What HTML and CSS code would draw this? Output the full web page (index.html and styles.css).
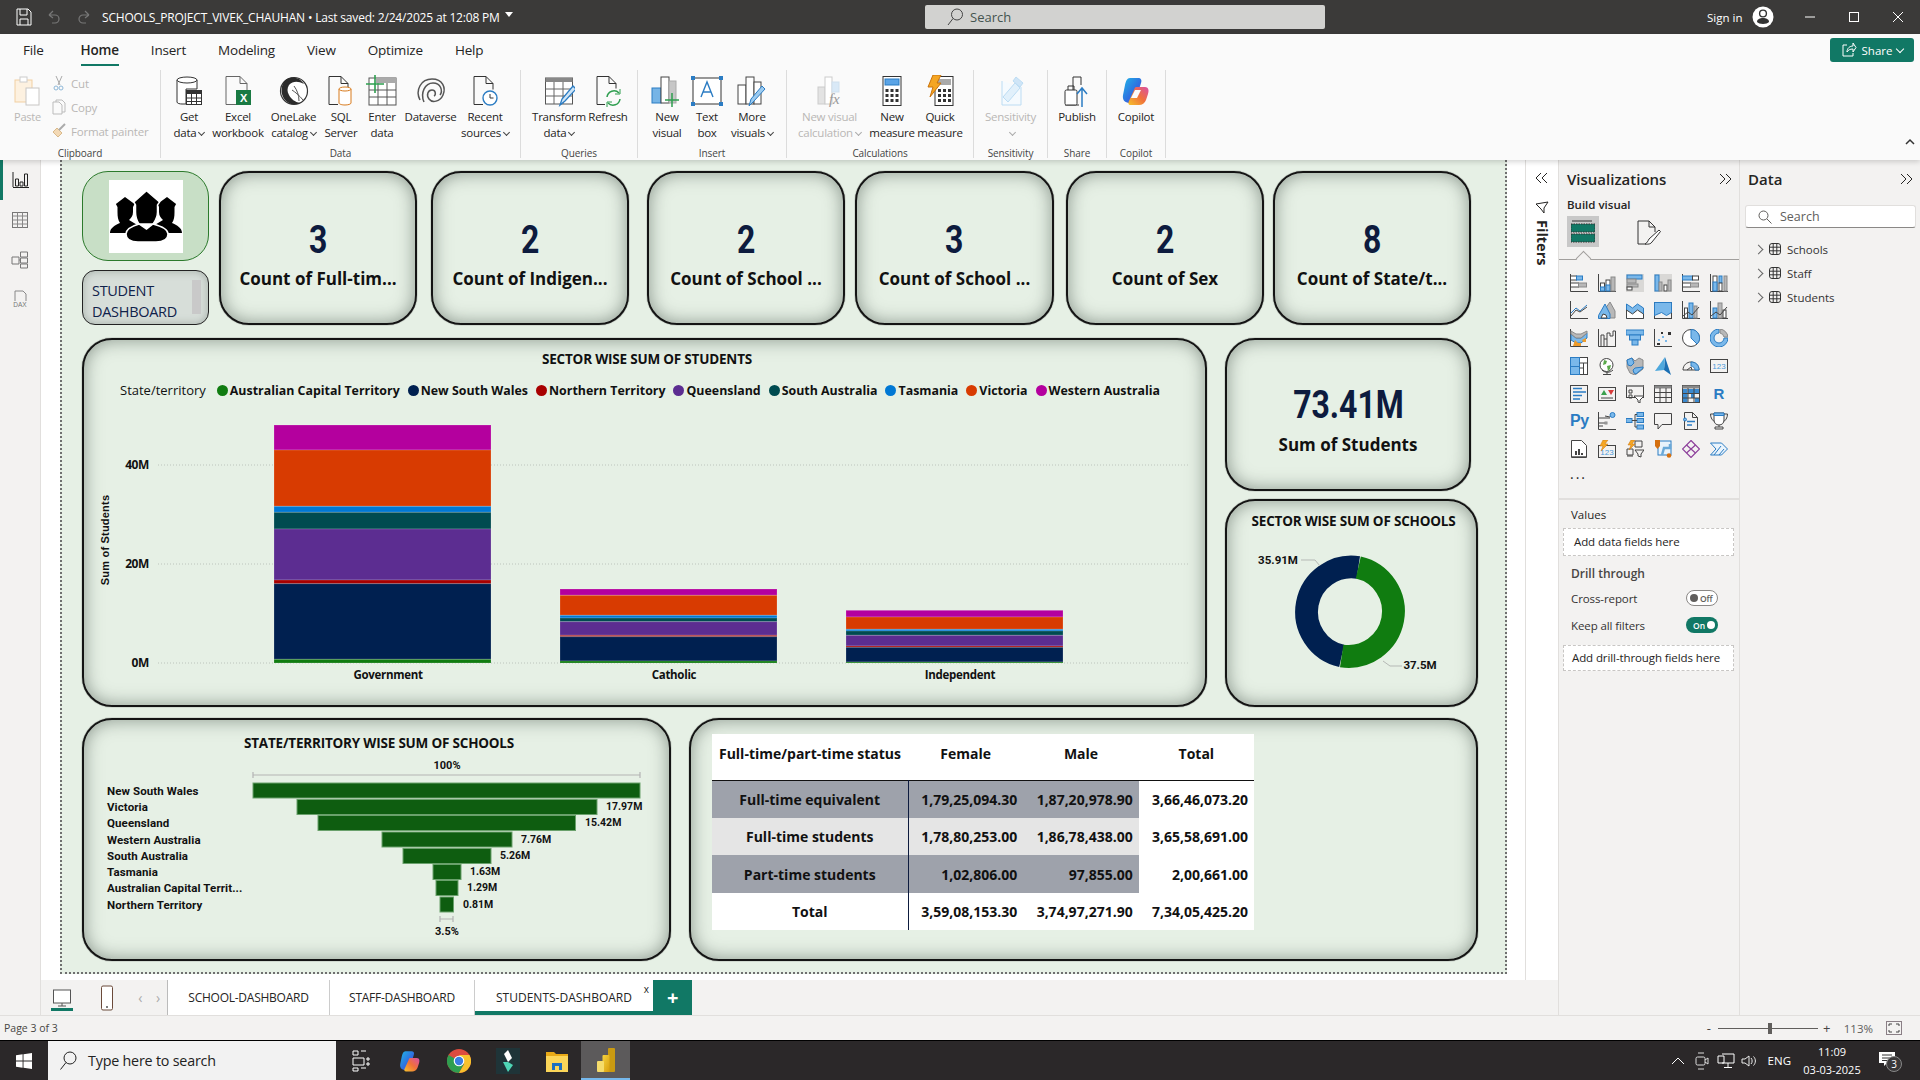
FILE: index.html
```html
<!DOCTYPE html>
<html lang="en">
<head>
<meta charset="UTF-8" />
<title>SCHOOLS_PROJECT_VIVEK_CHAUHAN - Power BI Desktop</title>
<link rel="stylesheet" href="styles.css">
</head>
<body>
  <svg class="defs" width="0" height="0" aria-hidden="true">
    <defs>
      <linearGradient id="copA" x1="0" y1="0" x2="1" y2="1"><stop offset="0" stop-color="#1fb6e8"/><stop offset=".55" stop-color="#2f6fe0"/><stop offset="1" stop-color="#7b3fd6"/></linearGradient>
      <linearGradient id="copB" x1="0" y1="1" x2="1" y2="0"><stop offset="0" stop-color="#f6c12c"/><stop offset=".5" stop-color="#f0713a"/><stop offset="1" stop-color="#d94fa8"/></linearGradient>
      <linearGradient id="pbiA" x1="0" y1="0" x2="1" y2="1"><stop offset="0" stop-color="#f5d33f"/><stop offset="1" stop-color="#d89e0c"/></linearGradient>
    </defs>
  </svg>

  <!-- title bar -->
  <header class="titlebar">
    <div class="tb-left">
      <svg class="tb-ico" width="16" height="18" viewBox="0 0 16 18"><path d="M1 1h11l3 3v13H1zM4 1v6h7V1M4 17v-6h8v6" fill="none" stroke="#fff"/></svg>
      <svg class="tb-ico" width="16" height="18" viewBox="0 0 16 18"><path d="M3 7l4-4M3 7l4 3M3 7h6a4 4 0 0 1 0 8H6" fill="none" stroke="#777" stroke-width="1.2"/></svg>
      <svg class="tb-ico" width="16" height="18" viewBox="0 0 16 18"><path d="M13 7L9 3M13 7l-4 3M13 7H7a4 4 0 0 0 0 8h3" fill="none" stroke="#777" stroke-width="1.2"/></svg>
      <span class="tb-title">SCHOOLS_PROJECT_VIVEK_CHAUHAN • Last saved: 2/24/2025 at 12:08 PM</span>
      <span class="tb-caret"></span>
    </div>
    <div class="tb-search">
      <svg width="20" height="20" viewBox="0 0 20 20"><circle cx="12" cy="7.5" r="5.5" fill="none" stroke="#444"/><path d="M8 11.5L3 18" stroke="#444" fill="none"/></svg>
      <span>Search</span>
    </div>
    <div class="tb-right">
      <span class="tb-sign">Sign in</span>
      <svg class="tb-avatar" width="22" height="22" viewBox="0 0 22 22"><circle cx="11" cy="11" r="10.5" fill="#fff"/><circle cx="11" cy="7.5" r="3.4" fill="none" stroke="#333" stroke-width="1.4"/><path d="M5 16c0-3 3-4 6-4s6 1 6 4c-2 2.600-10 2.600-12 0z" fill="#333"/></svg>
      <div class="win-btns">
        <svg width="12" height="12" viewBox="0 0 12 12"><path d="M1 6h10" stroke="#fff"/></svg>
        <svg width="12" height="12" viewBox="0 0 12 12"><rect x="1.500" y="1.500" width="9" height="9" fill="none" stroke="#fff"/></svg>
        <svg width="12" height="12" viewBox="0 0 12 12"><path d="M1 1l10 10M11 1L1 11" stroke="#fff"/></svg>
      </div>
    </div>
  </header>

  <!-- ribbon -->
  <section class="ribbon">
    <nav class="rb-tabs">
      <span class="tab-file">File</span><span class="active">Home</span><span>Insert</span><span>Modeling</span><span>View</span><span>Optimize</span><span>Help</span>
      <div class="share-btn">
        <svg width="16" height="16" viewBox="0 0 16 16"><path d="M6 3H2v11h10v-3M6 10c0-4 3-6 6-6V1l3 4.500-3 4.500V7c-3 0-5 1-6 3z" fill="none" stroke="#fff"/></svg>
        <span>Share</span><i class="chev chev-w"></i>
      </div>
    </nav>
    <div class="rb-body">
      <div class="rg rg-clip">
        <div class="rg-btns">
          <div class="rb disabled paste">
            <svg width="32" height="32" viewBox="0 0 32 32"><rect x="3" y="5" width="17" height="22" fill="#fdf1e0" stroke="#f1cfa2"/><rect x="8" y="2" width="7" height="5" fill="#fff" stroke="#ccc"/><rect x="14" y="13" width="13" height="17" fill="#fff" stroke="#c8c6c4"/></svg>
            <span>Paste</span>
          </div>
          <ul class="clip-list">
            <li><svg width="16" height="16" viewBox="0 0 16 16"><path d="M5 1l4 9M11 1l-4 9" stroke="#aaa" fill="none"/><circle cx="5" cy="13" r="2" fill="none" stroke="#8fb8d8"/><circle cx="10" cy="13" r="2" fill="none" stroke="#8fb8d8"/></svg>Cut</li>
            <li><svg width="16" height="16" viewBox="0 0 16 16"><path d="M5 3V1h6l3 3v9h-3M2 3h6l3 3v9H2z" fill="none" stroke="#bbb"/></svg>Copy</li>
            <li><svg width="16" height="16" viewBox="0 0 16 16"><path d="M2 9l4-4 5 5-4 4z" fill="#f3d9b5" stroke="#d9b98a"/><path d="M8 7l6-6" stroke="#aaa" stroke-width="2"/></svg>Format painter</li>
          </ul>
        </div>
        <div class="rg-label">Clipboard</div>
      </div>

      <div class="rg rg-data">
        <div class="rg-btns">
          <div class="rb">
            <svg width="32" height="32" viewBox="0 0 32 32"><path d="M4 5v22c0 1.500 3 2 5 2h4V14h11V5" fill="#fff" stroke="#333"/><ellipse cx="14" cy="5" rx="10" ry="3" fill="#fff" stroke="#333"/><rect x="13.500" y="15.500" width="15" height="14" fill="#fff" stroke="#333"/><path d="M13.500 17.500h15" stroke="#333" stroke-width="3"/><path d="M18.500 19v10M23.500 19v10M14 23h14M14 26.500h14" stroke="#333"/></svg>
            <span>Get<br>data<i class="chev"></i></span>
          </div>
          <div class="rb">
            <svg width="32" height="32" viewBox="0 0 32 32"><path d="M4 1.500h14l7 7v13M4 1.500v28h10" fill="none" stroke="#666"/><path d="M18 1.500v7h7" fill="none" stroke="#666"/><rect x="14" y="15" width="15" height="15" fill="#1a7a43"/><text x="21.500" y="27" class="xl">X</text></svg>
            <span>Excel<br>workbook</span>
          </div>
          <div class="rb">
            <svg width="32" height="32" viewBox="0 0 32 32"><circle cx="16" cy="16" r="13.500" fill="#fff" stroke="#333" stroke-width="1.200"/><path d="M9 4c5-3 13-2 17 5-6-3-11-3-15 1-2 3-2 7 0 10 2 4 6 7 11 8-6 3-13 1-17-6C2 15 4 7 9 4z" fill="#2a2a2a"/><path d="M14 15c3 2 7 5 11 10M16 11c3 4 5 9 5 15" fill="none" stroke="#555"/></svg>
            <span>OneLake<br>catalog<i class="chev"></i></span>
          </div>
          <div class="rb">
            <svg width="32" height="32" viewBox="0 0 32 32"><path d="M4 29.500V1.500h12l7 7v4M4 29.500h9M16 1.500v7h7" fill="none" stroke="#333"/><path d="M14 14v14c0 1.200 3 2 6 2s6-.8 6-2V14" fill="#fff" stroke="#d87a1c"/><ellipse cx="20" cy="14" rx="6" ry="2" fill="#fff" stroke="#d87a1c"/></svg>
            <span>SQL<br>Server</span>
          </div>
          <div class="rb">
            <svg width="32" height="32" viewBox="0 0 32 32"><rect x="3" y="3" width="27" height="27" fill="#fff" stroke="#555"/><path d="M10 3v5h20V3z" fill="#aaa"/><path d="M3 15h27M3 22h27M12 8v22M21 8v22" stroke="#555"/><path d="M9 0v18M0 9h18" stroke="#2e9e4f" stroke-width="1.600"/></svg>
            <span>Enter<br>data</span>
          </div>
          <div class="rb">
            <svg width="32" height="32" viewBox="0 0 32 32"><g fill="none" stroke="#555" stroke-width="1.500"><path d="M5 25C0 15 6 4 17 4s14 9 11 16-11 8-14 4-1-9 3-9 4 5 2 6"/><path d="M9 27c-4-9 1-19 9-19s10 8 7 12"/></g></svg>
            <span>Dataverse</span>
          </div>
          <div class="rb">
            <svg width="32" height="32" viewBox="0 0 32 32"><path d="M5 29.500V1.500h12l7 7v6M5 29.500h9M17 1.500v7h7" fill="none" stroke="#333"/><circle cx="21" cy="23" r="7" fill="#fff" stroke="#2b7cc3" stroke-width="1.400"/><path d="M21 19v4h3.500" fill="none" stroke="#333"/></svg>
            <span>Recent<br>sources<i class="chev"></i></span>
          </div>
        </div>
        <div class="rg-label">Data</div>
      </div>

      <div class="rg rg-query">
        <div class="rg-btns">
          <div class="rb">
            <svg width="32" height="32" viewBox="0 0 32 32"><rect x="2.500" y="3" width="27" height="26" fill="#fff" stroke="#555"/><path d="M2.500 5h27" stroke="#888" stroke-width="4"/><path d="M2.500 14h27M2.500 21h27M11 7v22M20 7v22" stroke="#666"/><path d="M17 30l2-6 11-13 3 3-11 12z" fill="#cfe5f7" stroke="#2b7cc3" stroke-width="1.300"/></svg>
            <span>Transform<br>data<i class="chev"></i></span>
          </div>
          <div class="rb">
            <svg width="32" height="32" viewBox="0 0 32 32"><path d="M5 29.500V1.500h12l7 7v5M5 29.500h8M17 1.500v7h7" fill="none" stroke="#333"/><path d="M15 22a7 7 0 0 1 12-4M28 24a7 7 0 0 1-12 4" fill="none" stroke="#2e9e4f" stroke-width="1.500"/><path d="M28 14v5h-5M15 32v-5h5" fill="none" stroke="#2e9e4f"/></svg>
            <span>Refresh</span>
          </div>
        </div>
        <div class="rg-label">Queries</div>
      </div>

      <div class="rg rg-insert">
        <div class="rg-btns">
          <div class="rb">
            <svg width="32" height="32" viewBox="0 0 32 32"><rect x="1" y="13" width="9" height="15" fill="#76b4e6" stroke="#2b7cc3"/><rect x="10" y="2" width="8" height="26" fill="#fff" stroke="#444"/><rect x="18" y="6" width="7" height="22" fill="#c6c6c6" stroke="#aaa"/><path d="M21 18v14M14 25h14" stroke="#2e9e4f" stroke-width="1.500"/></svg>
            <span>New<br>visual</span>
          </div>
          <div class="rb">
            <svg width="32" height="32" viewBox="0 0 32 32"><rect x="2" y="3" width="28" height="26" fill="#fff" stroke="#333"/><rect x="0" y="1" width="4" height="4" fill="#2b7cc3"/><rect x="28" y="1" width="4" height="4" fill="#2b7cc3"/><rect x="0" y="27" width="4" height="4" fill="#2b7cc3"/><rect x="28" y="27" width="4" height="4" fill="#2b7cc3"/><path d="M10 22l6-15 6 15M12 17h8" fill="none" stroke="#2b7cc3" stroke-width="1.400"/></svg>
            <span>Text<br>box</span>
          </div>
          <div class="rb">
            <svg width="32" height="32" viewBox="0 0 32 32"><rect x="2" y="10" width="8" height="19" fill="#fff" stroke="#444"/><rect x="10" y="2" width="8" height="27" fill="#fff" stroke="#444"/><rect x="18" y="7" width="7" height="22" fill="#fff" stroke="#444"/><path d="M13 31l2-7 11-13 3 3-11 12z" fill="#9ccbf0" stroke="#2b7cc3"/></svg>
            <span>More<br>visuals<i class="chev"></i></span>
          </div>
        </div>
        <div class="rg-label">Insert</div>
      </div>

      <div class="rg rg-calc">
        <div class="rg-btns">
          <div class="rb disabled">
            <svg width="32" height="32" viewBox="0 0 32 32"><rect x="4" y="12" width="7" height="17" fill="#e3e3e3" stroke="#ccc"/><rect x="11" y="2" width="7" height="27" fill="#fff" stroke="#ccc"/><rect x="18" y="7" width="7" height="10" fill="#d9e9f7" stroke="#cfe0ee"/><text x="15" y="29" class="fx">fx</text></svg>
            <span>New visual<br>calculation<i class="chev"></i></span>
          </div>
          <div class="rb">
            <svg width="32" height="32" viewBox="0 0 32 32"><rect x="7" y="1.500" width="18" height="29" fill="#fff" stroke="#333"/><rect x="9" y="4" width="14" height="6" fill="#5ba4e6" stroke="#2b7cc3"/><path d="M9.500 14h3v3h-3zM14.500 14h3v3h-3zM19.500 14h3v3h-3zM9.500 19h3v3h-3zM14.500 19h3v3h-3zM19.500 19h3v3h-3zM9.500 24h3v3h-3zM14.500 24h3v3h-3zM19.500 24h3v3h-3z" fill="#333"/></svg>
            <span>New<br>measure</span>
          </div>
          <div class="rb">
            <svg width="32" height="32" viewBox="0 0 32 32"><rect x="11" y="1.500" width="18" height="29" fill="#fff" stroke="#333"/><rect x="13" y="4" width="14" height="6" fill="#aaa"/><path d="M14 14h3v3h-3zM19 14h3v3h-3zM24 14h3v3h-3zM14 19h3v3h-3zM19 19h3v3h-3zM24 19h3v3h-3zM14 24h3v3h-3zM19 24h3v3h-3zM24 24h3v3h-3z" fill="#333"/><path d="M9 0h8l-4 8h4L6 22l3-10H4z" fill="#f5a623" stroke="#c9730c"/></svg>
            <span>Quick<br>measure</span>
          </div>
        </div>
        <div class="rg-label">Calculations</div>
      </div>

      <div class="rg rg-sens">
        <div class="rg-btns">
          <div class="rb disabled">
            <svg width="32" height="32" viewBox="0 0 32 32"><path d="M7 6v24h19V12" fill="#f5fafe" stroke="#bcdcf3"/><path d="M8 22L20 8l5 5-12 14z" fill="#e1f0fb" stroke="#bcdcf3"/><path d="M18 6l3-4 7 6-3 4z" fill="#cfe5f7" stroke="#bcdcf3"/></svg>
            <span>Sensitivity<br><i class="chev"></i></span>
          </div>
        </div>
        <div class="rg-label">Sensitivity</div>
      </div>

      <div class="rg rg-share">
        <div class="rg-btns">
          <div class="rb">
            <svg width="32" height="32" viewBox="0 0 32 32"><path d="M12 28V2h8v8M4 30h14" fill="none" stroke="#333"/><rect x="4" y="15" width="12" height="15" rx="1.500" fill="#fff" stroke="#333"/><path d="M7 15v-4h6v4" fill="none" stroke="#333"/><path d="M21 32V14M16 19l5-6 5 6" fill="none" stroke="#2b7cc3" stroke-width="1.500"/></svg>
            <span>Publish</span>
          </div>
        </div>
        <div class="rg-label">Share</div>
      </div>

      <div class="rg rg-cop">
        <div class="rg-btns">
          <div class="rb">
            <svg width="32" height="32" viewBox="0 0 32 32"><path d="M10 3h8c3 0 4 2 3 5l-5 16c-1 3-3 4-6 4-4 0-8-2-7-8l2-10c1-4 2-7 5-7z" fill="url(#copA)"/><path d="M16 12h9c4 0 4 4 3 7l-2 6c-1 3-4 5-7 5h-8c-3 0-3-2-2-4l5-11c.5-1.500 1-3 2-3z" fill="url(#copB)"/><path d="M15 15l6 0-4 8h-6z" fill="#fafafa"/></svg>
            <span>Copilot</span>
          </div>
        </div>
        <div class="rg-label">Copilot</div>
      </div>

      <svg class="rb-collapse" width="10" height="8" viewBox="0 0 10 8"><path d="M1 6l4-4 4 4" fill="none" stroke="#333" stroke-width="1.500"/></svg>
    </div>
  </section>

  <main class="mainrow">
    <aside class="rail">
      <div class="rail-item active"><svg width="18" height="18" viewBox="0 0 18 18"><path d="M1 1v15M1 16.500h16" stroke="#222" fill="none"/><path d="M3.500 8h3v7h-3zM8 11h3v4H8zM12.500 3h3v12h-3z" fill="none" stroke="#222"/></svg></div>
      <div class="rail-item"><svg width="18" height="18" viewBox="0 0 18 18"><rect x="1.500" y="1.500" width="15" height="15" fill="none" stroke="#777"/><path d="M1.500 5h15M1.500 9h15M1.500 13h15M6.500 1.500v15M11.500 1.500v15" stroke="#888" fill="none"/></svg></div>
      <div class="rail-item"><svg width="18" height="18" viewBox="0 0 18 18"><path d="M9.500 1h7v5h-7zM1 6h7v7H1zM9.500 7h7v5h-7zM9.500 13h7v4h-7zM8 9h1.500" fill="none" stroke="#777"/></svg></div>
      <div class="rail-item"><svg width="18" height="20" viewBox="0 0 18 20"><path d="M4 11V1h8l3 3v7" fill="none" stroke="#888"/><text x="9" y="17" class="dax">DAX</text></svg></div>
    </aside>

    <div class="center">
      <div class="stage">
        <div class="canvas">

          <div class="row row-kpi">
            <div class="brand-col">
              <div class="brand-logo">
                <svg class="brand-art" width="74" height="73" viewBox="0 0 74 73">
                  <rect width="74" height="73" fill="#fff"/>
                  <g fill="#000">
                    <path d="M16 17L25.500 24 24 27V32C24 36 22 38 20 40L30 46 24 53H1C1 48 6 45 11 43 9 40 8.500 37 8.500 32V27L6.900 24Z"/>
                    <path d="M58 17L48.500 24 50 27V32C50 36 52 38 54 40L44 46 50 53H73C73 48 68 45 63 43 65 40 65.500 37 65.500 32V27L67.100 24Z"/>
                  </g>
                  <g fill="#000" stroke="#fff" stroke-width="1.500">
                    <path d="M37.500 10.700L50.600 22 48.500 25V32C48.500 38 46 41 44 44H30C28 41 26.500 38 26.500 32V25L24.900 22Z"/>
                    <path d="M30 44L37.500 49 44 44C52 46 59 49 59 54 59 60 53 62 47 62H29C23 62 17 60 17 54 17 49 23 46 30 44Z"/>
                  </g>
                </svg>
              </div>
              <div class="brand-label">
                <span>STUDENT<br>DASHBOARD</span>
                <i class="brand-scroll"></i>
              </div>
            </div>
            <div class="visual kpi k1"><div class="kpi-value">3</div><div class="kpi-name">Count of Full-tim...</div></div>
            <div class="visual kpi k2"><div class="kpi-value">2</div><div class="kpi-name">Count of Indigen...</div></div>
            <div class="visual kpi k3"><div class="kpi-value">2</div><div class="kpi-name">Count of School ...</div></div>
            <div class="visual kpi k4"><div class="kpi-value">3</div><div class="kpi-name">Count of School ...</div></div>
            <div class="visual kpi k5"><div class="kpi-value">2</div><div class="kpi-name">Count of Sex</div></div>
            <div class="visual kpi k6"><div class="kpi-value">8</div><div class="kpi-name">Count of State/t...</div></div>
          </div>

          <div class="row row-mid">
            <div class="visual chart-main">
              <h2 class="viz-title">SECTOR WISE SUM OF STUDENTS</h2>
              <div class="legend">
                <span class="legend-name">State/territory</span>
                <span class="lg"><i class="c-act"></i>Australian Capital Territory</span>
                <span class="lg"><i class="c-nsw"></i>New South Wales</span>
                <span class="lg"><i class="c-nt"></i>Northern Territory</span>
                <span class="lg"><i class="c-qld"></i>Queensland</span>
                <span class="lg"><i class="c-sa"></i>South Australia</span>
                <span class="lg"><i class="c-tas"></i>Tasmania</span>
                <span class="lg"><i class="c-vic"></i>Victoria</span>
                <span class="lg"><i class="c-wa"></i>Western Australia</span>
              </div>
              <svg class="chart-svg" width="1121" height="305" viewBox="84 400 1121 305">
                <g class="gridline">
                  <path d="M158 465H1189"/><path d="M158 564H1189"/><path d="M158 663H1189"/>
                </g>
                <g class="ax-y">
                  <text x="149" y="469">40M</text><text x="149" y="568">20M</text><text x="149" y="667">0M</text>
                </g>
                <text class="ax-title" transform="translate(109 540) rotate(-90)">Sum of Students</text>

                <g class="stack">
                  <rect class="f-wa" x="274" y="425" width="217" height="25"/>
                  <rect class="f-vic" x="274" y="450" width="217" height="56.300"/>
                  <rect class="f-tas" x="274" y="506.300" width="217" height="6"/>
                  <rect class="f-sa" x="274" y="512.300" width="217" height="16.700"/>
                  <rect class="f-qld" x="274" y="529" width="217" height="51"/>
                  <rect class="f-nt" x="274" y="580" width="217" height="3.700"/>
                  <rect class="f-nsw" x="274" y="583.700" width="217" height="75.600"/>
                  <rect class="f-act" x="274" y="659.300" width="217" height="3.700"/>

                  <rect class="f-wa" x="560" y="589" width="217" height="6.300"/>
                  <rect class="f-vic" x="560" y="595.300" width="217" height="20"/>
                  <rect class="f-tas" x="560" y="615.300" width="217" height="2.700"/>
                  <rect class="f-sa" x="560" y="618" width="217" height="3.700"/>
                  <rect class="f-qld" x="560" y="621.700" width="217" height="13.600"/>
                  <rect class="f-nt" x="560" y="635.300" width="217" height="1.400"/>
                  <rect class="f-nsw" x="560" y="636.700" width="217" height="24.300"/>
                  <rect class="f-act" x="560" y="661" width="217" height="2"/>

                  <rect class="f-wa" x="846" y="610.300" width="217" height="6.700"/>
                  <rect class="f-vic" x="846" y="617" width="217" height="12.300"/>
                  <rect class="f-tas" x="846" y="629.300" width="217" height="1.700"/>
                  <rect class="f-sa" x="846" y="631" width="217" height="4.300"/>
                  <rect class="f-qld" x="846" y="635.300" width="217" height="10.700"/>
                  <rect class="f-nt" x="846" y="646" width="217" height="1.300"/>
                  <rect class="f-nsw" x="846" y="647.300" width="217" height="14.700"/>
                  <rect class="f-act" x="846" y="662" width="217" height="1"/>
                </g>
                <g class="ax-x">
                  <text x="388" y="679">Government</text><text x="674" y="679">Catholic</text><text x="960" y="679">Independent</text>
                </g>
              </svg>
            </div>

            <div class="mid-side">
              <div class="visual kpi total"><div class="kpi-value">73.41M</div><div class="kpi-name">Sum of Students</div></div>
              <div class="visual donut">
                <h2 class="viz-title donut-title">SECTOR WISE SUM OF SCHOOLS</h2>
                <svg class="chart-svg" width="248" height="176" viewBox="1227 529 248 176">
                  <path class="ring r-nsw" d="M1341.700 655.900A45 45 0 0 1 1358.300 567.500"/>
                  <path class="ring r-act" d="M1358.300 567.500A45 45 0 0 1 1341.700 655.900"/>
                  <path class="leader" d="M1301 560h14l5 6M1383 661l7 5h12"/>
                  <text class="donut-lab" x="1278" y="564">35.91M</text>
                  <text class="donut-lab" x="1420" y="669">37.5M</text>
                </svg>
              </div>
            </div>
          </div>

          <div class="row row-bottom">
            <div class="visual funnel">
              <h2 class="viz-title funnel-title">STATE/TERRITORY WISE SUM OF SCHOOLS</h2>
              <svg class="chart-svg" width="584" height="208" viewBox="84 751 584 208">
                <text class="fn-pct" x="447" y="769">100%</text>
                <path class="fn-range" d="M253 772v6M253 775H640M640 772v6"/>
                <g class="fn-bars">
                  <rect x="253" y="783" width="387" height="15"/>
                  <rect x="297" y="799.500" width="300" height="15"/>
                  <rect x="318" y="815.500" width="257.500" height="15"/>
                  <rect x="382" y="832" width="130" height="15"/>
                  <rect x="403" y="848.500" width="88" height="15"/>
                  <rect x="433" y="864.500" width="28" height="15"/>
                  <rect x="436" y="880.500" width="22" height="15"/>
                  <rect x="440" y="897" width="13.500" height="15"/>
                </g>
                <g class="fn-cat">
                  <text x="107" y="794.500">New South Wales</text>
                  <text x="107" y="811">Victoria</text>
                  <text x="107" y="827">Queensland</text>
                  <text x="107" y="844">Western Australia</text>
                  <text x="107" y="860">South Australia</text>
                  <text x="107" y="876">Tasmania</text>
                  <text x="107" y="892">Australian Capital Territ...</text>
                  <text x="107" y="909">Northern Territory</text>
                </g>
                <g class="fn-val">
                  <text x="606" y="810">17.97M</text>
                  <text x="585" y="826">15.42M</text>
                  <text x="521" y="843">7.76M</text>
                  <text x="500" y="859">5.26M</text>
                  <text x="470" y="875">1.63M</text>
                  <text x="467" y="891">1.29M</text>
                  <text x="463" y="908">0.81M</text>
                </g>
                <path class="fn-range" d="M440 916v6M440 919H453M453 916v6"/>
                <text class="fn-pct" x="447" y="935">3.5%</text>
              </svg>
            </div>

            <div class="visual table-card">
              <table class="matrix">
                <thead>
                  <tr><th>Full-time/part-time status</th><th>Female</th><th>Male</th><th>Total</th></tr>
                </thead>
                <tbody>
                  <tr class="band-dark"><th>Full-time equivalent</th><td>1,79,25,094.30</td><td>1,87,20,978.90</td><td>3,66,46,073.20</td></tr>
                  <tr class="band-light"><th>Full-time students</th><td>1,78,80,253.00</td><td>1,86,78,438.00</td><td>3,65,58,691.00</td></tr>
                  <tr class="band-dark"><th>Part-time students</th><td>1,02,806.00</td><td>97,855.00</td><td>2,00,661.00</td></tr>
                  <tr class="row-total"><th>Total</th><td>3,59,08,153.30</td><td>3,74,97,271.90</td><td>7,34,05,425.20</td></tr>
                </tbody>
              </table>
            </div>
          </div>

        </div>
        <div class="filters-strip">
          <svg class="pane-chev" width="14" height="12" viewBox="0 0 14 12"><path d="M6 1L1 6l5 5M12 1L7 6l5 5" fill="none" stroke="#252423"/></svg>
          <svg width="14" height="14" viewBox="0 0 14 14"><path d="M1 3l12-2-4 6v5L6 8z" fill="none" stroke="#252423"/></svg>
          <span class="filters-text">Filters</span>
        </div>
      </div>

      <div class="tabbar">
        <div class="tab-views">
          <div class="view-btn on"><svg width="20" height="20" viewBox="0 0 20 20"><rect x="1.500" y="2" width="17" height="13" fill="#fff" stroke="#555"/><path d="M10 15v3M6 18h8" stroke="#555" fill="none"/></svg></div>
          <div class="view-btn"><svg width="14" height="26" viewBox="0 0 14 26"><rect x="1.500" y="1" width="11" height="24" rx="1.500" fill="#fff" stroke="#6b4a3a"/><circle cx="7" cy="22" r="1" fill="#555"/></svg></div>
          <span class="tab-arrow">‹</span><span class="tab-arrow">›</span>
        </div>
        <div class="tab">SCHOOL-DASHBOARD</div>
        <div class="tab">STAFF-DASHBOARD</div>
        <div class="tab active">STUDENTS-DASHBOARD<span class="tab-x">x</span></div>
        <div class="tab-add">+</div>
      </div>
    </div>

    <aside class="pane viz">
      <div class="pane-head"><span>Visualizations</span><svg class="pane-chev" width="14" height="12" viewBox="0 0 14 12"><path d="M2 1l5 5-5 5M8 1l5 5-5 5" fill="none" stroke="#252423"/></svg></div>
      <div class="build-label">Build visual</div>
      <div class="build-tabs">
        <div class="build-tab on">
          <svg width="24" height="24" viewBox="0 0 24 24"><path d="M1 1h20" stroke="#333"/><rect x="0" y="4" width="24" height="8" fill="#117865" stroke="#333" stroke-dasharray="1.500 1"/><rect x="0" y="14" width="24" height="8" fill="#117865" stroke="#333" stroke-dasharray="1.500 1"/></svg>
        </div>
        <div class="build-tab">
          <svg width="26" height="26" viewBox="0 0 26 26"><path d="M2 25V2h11l6 6v5M2 25h8M13 2v6h6" fill="none" stroke="#333"/><path d="M13 20L23 11l1.500 1.500L16 23c-1 2-4 2.500-7 2 2-1 3-3 4-5z" fill="#fff" stroke="#333"/></svg>
        </div>
      </div>
      <div class="build-rule"></div>

      <div class="viz-grid">
        <svg viewBox="0 0 18 18"><path class="ik" d="M.5 0v17.500H18"/><rect class="it" x=".5" y="2" width="6" height="4"/><rect class="ib" x="6.500" y="2" width="6" height="4"/><rect class="it" x=".5" y="9" width="8" height="4"/><rect class="ig" x="8.500" y="9" width="8" height="4"/></svg>
        <svg viewBox="0 0 18 18"><path class="ik" d="M.5 0v17.500H18"/><rect class="it" x="2.500" y="9" width="4" height="8"/><rect class="ib" x="2.500" y="13" width="4" height="4"/><rect class="it" x="8" y="6" width="4" height="11"/><rect class="ib" x="8" y="11" width="4" height="6"/><rect class="ig" x="13" y="3" width="4" height="14"/></svg>
        <svg viewBox="0 0 18 18"><rect class="ih" width="18" height="18"/><rect class="ib" x="1" y="1" width="15" height="4"/><rect class="ig" x="1" y="5" width="9" height="4"/><rect class="ig" x="1" y="10" width="11" height="3"/><rect class="it" x="1" y="13" width="5" height="3"/></svg>
        <svg viewBox="0 0 18 18"><rect class="ih" width="18" height="18"/><rect class="ib" x="1" y="1" width="4" height="16"/><rect class="ig" x="5" y="8" width="3" height="9"/><rect class="it" x="10" y="11" width="3" height="6"/><rect class="ig" x="14" y="6" width="3" height="11"/></svg>
        <svg viewBox="0 0 18 18"><path class="ik" d="M.5 0v17.500H18"/><rect class="ib" x=".5" y="2" width="10" height="4"/><rect class="it" x="10.500" y="2" width="6" height="4"/><rect class="it" x=".5" y="9" width="8" height="4"/><rect class="ig" x="8.500" y="9" width="8" height="4"/></svg>
        <svg viewBox="0 0 18 18"><path class="ik" d="M.5 0v17.500H18"/><rect class="it" x="3" y="2" width="4" height="15"/><rect class="ib" x="3" y="8" width="4" height="9"/><rect class="ib" x="9" y="2" width="3" height="7"/><rect class="it" x="9" y="9" width="3" height="8"/><rect class="ig" x="14" y="2" width="3" height="15"/></svg>

        <svg viewBox="0 0 18 18"><path class="ik" d="M.5 0v17.500H18"/><path class="il" d="M1 12l5-5 4 3 7-6"/><path class="ik" d="M1 15l5-6 4 2 7-5"/></svg>
        <svg viewBox="0 0 18 18"><path class="ig" d="M7 8l5-7 5 9v7H9z"/><path class="ib" d="M.5 17.500v-3L7 3l5 10v4.500z"/><path class="it" d="M3 17l2-4 3 1 1 3z"/></svg>
        <svg viewBox="0 0 18 18"><path class="ib" d="M.5 3l6 4 5-4 6 4v10.500H.5z"/><path class="it" d="M.5 9l6 4 5-4 6 4v4.500H.5z"/></svg>
        <svg viewBox="0 0 18 18"><rect class="ik" x=".5" y="1.500" width="17" height="16"/><path class="ib" d="M.5 1.500h17v10l-5 3-5-3-7 3z"/></svg>
        <svg viewBox="0 0 18 18"><path class="ik" d="M.5 0v17.500H18"/><rect class="it" x="2.500" y="7" width="3" height="10"/><rect class="ib" x="7" y="2" width="4" height="15"/><rect class="ig" x="12" y="5" width="3" height="12"/><path class="ik" d="M1 15l5-4 4 3 7-8"/></svg>
        <svg viewBox="0 0 18 18"><path class="ik" d="M.5 0v17.500H18"/><rect class="ib" x="3" y="7" width="4" height="10"/><rect class="ig" x="8" y="2" width="4" height="15"/><rect class="it" x="13" y="9" width="3" height="8"/><path class="ik" d="M1 15l5-4 4 3 7-8"/></svg>

        <svg viewBox="0 0 18 18"><path class="ik" d="M.5 0v17.500H18"/><path class="ib" d="M1 5l5 4h5l6-5v5l-6 5H6L1 11z"/><path class="iy" d="M5 11l3 3h3v3H3zM12 11l4-2v4h-3z"/><path class="ig" d="M1 2l5 3h5l6-3v2l-6 5H6L1 5z"/></svg>
        <svg viewBox="0 0 18 18"><path class="ik" d="M.5 0v17.500H18"/><path class="ik" d="M3 17V6h3v11M6 10h3v7M9 10V4h3v3h3V2h2.500v15"/></svg>
        <svg viewBox="0 0 18 18"><rect class="ib" x="0" y="1" width="18" height="5"/><rect class="ib" x="3.500" y="6" width="11" height="5"/><rect class="ib" x="6" y="11" width="6" height="5"/></svg>
        <svg viewBox="0 0 18 18"><path class="ik" d="M.5 0v17.500H18"/><path class="sq-l" d="M4 10h2v2H4zM8 7h2v2H8zM11 11h2v2h-2z"/><path class="sq-d" d="M14 3h3v3h-3zM3 14h3v2H3zM7 3h2v2H7z"/></svg>
        <svg viewBox="0 0 18 18"><circle class="it" cx="9" cy="9" r="8.500"/><path class="ib" d="M9 .5A8.500 8.500 0 0 1 15 15L9 9z"/></svg>
        <svg viewBox="0 0 18 18"><path class="ib" d="M9 0a9 9 0 1 0 9 9h-4a5 5 0 1 1-5-5z"/><path class="ig" d="M10 0a9 9 0 0 1 8 8h-4a5 5 0 0 0-4-4z"/></svg>

        <svg viewBox="0 0 18 18"><rect class="it" x=".5" y=".5" width="17" height="17"/><rect class="ib" x=".5" y=".5" width="9" height="9"/><rect class="ib" x=".5" y="9.500" width="9" height="8"/><path class="ik" d="M9.500 6H17.500M13.500 6V17.500M9.500 11h4"/></svg>
        <svg viewBox="0 0 18 18"><circle cx="8.500" cy="8" r="6.500" fill="#fff" stroke="#444"/><path d="M6 3l3 1-1 3-3 1zM9 9l4-1-1 4-2 2z" fill="#5aa94a"/><path d="M4 13c3 3 8 3 11 0M9 15v2M5 17.500h8" fill="none" stroke="#444"/></svg>
        <svg viewBox="0 0 18 18"><path class="ig" d="M1 3l5-2 3 3 4-3 4 2v9l-8 6-5-2-3-6z"/><path class="ib" d="M1 3l5-2 2 5-3 3-3-1zM9 11l8-1v1l-7 6-2-1-1-3z"/></svg>
        <svg viewBox="0 0 18 18"><path d="M11 0l6 18-7-5z" fill="#1b6fb3"/><path d="M11 0L1 14l9-1z" fill="#4ea8dd"/></svg>
        <svg viewBox="0 0 18 18"><path class="ik" d="M1 13c0-5 4-8 8-8s8 3 8 8z"/><path class="ib" d="M9 5c5 0 8 3 8 8h-4c0-2-2-4-4-4z"/><path class="ik" d="M5 13l4-3 1 3"/></svg>
        <svg viewBox="0 0 18 18"><rect class="ik" x=".5" y="2.500" width="17" height="13"/><text class="i123" x="9" y="12">123</text></svg>

        <svg viewBox="0 0 18 18"><rect class="ik" x=".5" y=".5" width="17" height="17"/><path class="lines" d="M3 3.500h9M3 7h13M3 10.500h9M3 14h7"/></svg>
        <svg viewBox="0 0 18 18"><rect class="ik" x=".5" y="2.500" width="17" height="13"/><path d="M3 10l3-5 3 5z" fill="#3aa04c"/><path d="M10 5h6l-3 5z" fill="#d83b3b"/><path class="ik" d="M3 13h12"/></svg>
        <svg viewBox="0 0 18 18"><rect class="ik" x=".5" y=".5" width="17" height="12"/><path d="M.5 1h17" stroke="#888" stroke-width="2"/><path class="ik" d="M3 5h3v3H3zM3 10h3v3H3z"/><path class="it" d="M8 11h10l-4 4v3l-2-1v-2z"/></svg>
        <svg viewBox="0 0 18 18"><rect class="ik" x=".5" y=".5" width="17" height="17"/><path d="M.5 2h17" stroke="#888" stroke-width="3"/><path class="ik" d="M.5 7.500h17M.5 12.500h17M6 3v15M12 3v15"/></svg>
        <svg viewBox="0 0 18 18"><rect class="ik" x=".5" y=".5" width="17" height="17"/><path d="M.5 2h17" stroke="#888" stroke-width="3"/><path d="M1 4h4.500v13H1zM6 4h11v4H6z" fill="#3a8ad0"/><path d="M9 9h3.500v4H9zM13 13h4v4h-4z" fill="#3a8ad0"/><path class="ik" d="M.5 8.500h17M.5 13h17M6 3v15M12 3v15"/></svg>
        <span class="icon-r">R</span>

        <span class="icon-py">Py</span>
        <svg viewBox="0 0 18 18"><path class="ik" d="M.5 0v17.500H18M1 6h11M1 11h7M1 14h4"/><circle class="ib" cx="14.500" cy="3" r="2.500"/><rect class="ig" x="7" y="10" width="2" height="2"/><path class="ik" d="M7 4l5 1"/></svg>
        <svg viewBox="0 0 18 18"><rect class="ib" x="0" y="6.500" width="6" height="4"/><rect class="ib" x="11" y=".5" width="6.500" height="4"/><rect class="ib" x="11" y="6.500" width="6.500" height="4"/><rect class="ib" x="11" y="13" width="6.500" height="4"/><path class="ik" d="M6 8.500h5M9 2.500v12.500M9 2.500h2M9 15h2"/></svg>
        <svg viewBox="0 0 18 18"><path class="ik" d="M.5 1.500h17v11H8L4 17v-4.500H.5z"/></svg>
        <svg viewBox="0 0 18 18"><path class="ik" d="M2.500 17.500V.5h8l5 5v12z"/><path class="ik" d="M10.500.5v5h5"/><path class="lines" d="M5 9.500h8M5 13h5"/><circle class="ib" cx="3" cy="7.500" r="1.500"/></svg>
        <svg viewBox="0 0 18 18"><path class="ik" d="M4 2H.5c0 4 2 7 5 8M14 2h3.500c0 4-2 7-5 8M9 12v3M5 17h8v-2H5z"/><path class="it" d="M4 1h10v7c0 3-2 5-5 5s-5-2-5-5z"/><path class="ib" d="M4 1h10v2.500H4z"/></svg>

        <svg viewBox="0 0 18 18"><path d="M1.500 17.500V.5h10l5 5v12z" fill="#fff" stroke="#444"/><path d="M5 15v-4h2v4zM8 15V9h2v6zM11 15v-2h2v2z" fill="#444"/><path d="M2 16.500h14" stroke="#777"/></svg>
        <svg viewBox="0 0 18 18"><rect class="ik" x=".5" y="5.500" width="17" height="12"/><text class="i123" x="9" y="15">123</text><path d="M5 0h5L7 4h3L3 11l2-5H2z" fill="#f5a623" stroke="#c9730c" stroke-width=".5"/></svg>
        <svg viewBox="0 0 18 18"><path class="ik" d="M9 1h7v6H9zM1 9h6v6H1zM1 16h6"/><path class="ik" d="M9 10h9l-3 4v3l-3-1v-2z"/><path d="M5 0h4L6 4h3L3 10l2-5H2z" fill="#f5a623" stroke="#c9730c" stroke-width=".5"/></svg>
        <svg viewBox="0 0 18 18"><rect x="4" y="1" width="13" height="14" fill="#e9f3fb" stroke="#2b7cc3"/><path d="M8 15l2-7h6v-4" fill="none" stroke="#6aa9d8" stroke-width="2.500"/><path d="M1 0h5v6L3.500 9 1 6z" fill="#d5700f"/><circle cx="15" cy="15.500" r="2.300" fill="#d5700f"/></svg>
        <svg viewBox="0 0 18 18"><path d="M9 .5L17.500 9 9 17.500.5 9z" fill="none" stroke="#8d3f9b" stroke-width="1.200"/><path d="M4.500 5L13.500 13M13.500 5L4.500 13" fill="none" stroke="#8d3f9b" stroke-width="1.200"/></svg>
        <svg viewBox="0 0 18 18"><path d="M.5 3h11L17.500 9l-6 6H.5L6 9z" fill="#eaf4fc" stroke="#2b7cc3"/><path d="M4 15l7-9M9 15l5-6" stroke="#2b7cc3" fill="none"/></svg>
      </div>
      <div class="viz-more">···</div>
      <div class="viz-rule"></div>

      <div class="well-label">Values</div>
      <div class="well">Add data fields here</div>
      <div class="well-head">Drill through</div>
      <div class="toggle-row"><span>Cross-report</span><span class="toggle off"><i></i>Off</span></div>
      <div class="toggle-row"><span>Keep all filters</span><span class="toggle on">On<i></i></span></div>
      <div class="well well-drill">Add drill-through fields here</div>
    </aside>

    <aside class="pane data">
      <div class="pane-head"><span>Data</span><svg class="pane-chev" width="14" height="12" viewBox="0 0 14 12"><path d="M2 1l5 5-5 5M8 1l5 5-5 5" fill="none" stroke="#252423"/></svg></div>
      <div class="data-search">
        <svg width="14" height="14" viewBox="0 0 14 14"><circle cx="5.500" cy="5.500" r="4.500" fill="none" stroke="#605e5c"/><path d="M9 9l4.500 4.500" stroke="#605e5c"/></svg>
        <span>Search</span>
      </div>
      <ul class="tree">
        <li><i class="tree-chev"></i><svg width="12" height="12" viewBox="0 0 12 12"><rect x=".5" y=".5" width="11" height="11" rx="2.500" fill="none" stroke="#333"/><path d="M.5 4.200h11M.5 7.800h11M4.200.5v11M7.800.5v11" stroke="#333" fill="none"/></svg>Schools</li>
        <li><i class="tree-chev"></i><svg width="12" height="12" viewBox="0 0 12 12"><rect x=".5" y=".5" width="11" height="11" rx="2.500" fill="none" stroke="#333"/><path d="M.5 4.200h11M.5 7.800h11M4.200.5v11M7.800.5v11" stroke="#333" fill="none"/></svg>Staff</li>
        <li><i class="tree-chev"></i><svg width="12" height="12" viewBox="0 0 12 12"><rect x=".5" y=".5" width="11" height="11" rx="2.500" fill="none" stroke="#333"/><path d="M.5 4.200h11M.5 7.800h11M4.200.5v11M7.800.5v11" stroke="#333" fill="none"/></svg>Students</li>
      </ul>
    </aside>
  </main>

  <footer class="statusbar">
    <span>Page 3 of 3</span>
    <div class="zoom-ctl">
      <span class="zoom-sign">-</span>
      <span class="zoom-track"><i></i></span>
      <span class="zoom-sign">+</span>
      <span class="zoom-val">113%</span>
      <svg width="16" height="14" viewBox="0 0 16 14"><rect x=".5" y=".5" width="15" height="13" fill="none" stroke="#8a7f86"/><path d="M3 5V3h3M10 3h3v2M13 9v2h-3M6 11H3V9" fill="none" stroke="#444"/></svg>
    </div>
  </footer>

  <footer class="taskbar">
    <div class="start">
      <svg width="16" height="16" viewBox="0 0 16 16"><path d="M0 2.300l6.600-1v6.200H0zM7.500 1.200L16 0v7.500H7.500zM0 8.500h6.600v6.200l-6.600-1zM7.500 8.500H16V16l-8.500-1.200z" fill="#fff"/></svg>
    </div>
    <div class="task-search">
      <svg width="18" height="20" viewBox="0 0 18 20"><circle cx="11" cy="7" r="6" fill="none" stroke="#222"/><path d="M7 11.500L1.500 18.500" stroke="#222"/></svg>
      <span>Type here to search</span>
    </div>
    <div class="task-icons">
      <div class="task-ico"><svg width="18" height="22" viewBox="0 0 18 22"><path d="M1 1h5v4H1zM1 8h11v7H1zM1 18h5v3H1zM9 1h5M9 18h5M15 8h2v2h-2zM15 13h2v2h-2z" fill="none" stroke="#fff"/></svg></div>
      <div class="task-ico"><svg width="24" height="24" viewBox="0 0 32 32"><path d="M10 3h8c3 0 4 2 3 5l-5 16c-1 3-3 4-6 4-4 0-8-2-7-8l2-10c1-4 2-7 5-7z" fill="url(#copA)"/><path d="M16 12h9c4 0 4 4 3 7l-2 6c-1 3-4 5-7 5h-8c-3 0-3-2-2-4l5-11c.5-1.500 1-3 2-3z" fill="url(#copB)"/></svg></div>
      <div class="task-ico"><svg width="24" height="24" viewBox="0 0 24 24"><circle cx="12" cy="12" r="12" fill="#dd4b3e"/><path d="M12 12L1.600 6A12 12 0 0 0 12 24l5-9z" fill="#2f9e4f"/><path d="M12 6h10.400A12 12 0 0 1 12 24l5.200-9z" fill="#f7c12c"/><circle cx="12" cy="12" r="5.300" fill="#fff"/><circle cx="12" cy="12" r="4.200" fill="#3b7de0"/></svg></div>
      <div class="task-ico"><svg width="24" height="26" viewBox="0 0 24 26"><rect x="0" y="0" width="24" height="26" fill="#1f3438"/><path d="M8 6l4-4 4 8-4 4z" fill="#fff"/><path d="M7 14l5 0 5 3-5 7z" fill="#4ed6b6"/></svg></div>
      <div class="task-ico"><svg width="22" height="22" viewBox="0 0 22 22"><path d="M0 2h8l2 2h12v4H0z" fill="#e8a917"/><rect y="6" width="22" height="16" fill="#fbd558"/><path d="M6 20v-7h10v7h-3v-4H9v4z" fill="#1c6fc0"/></svg></div>
      <div class="task-ico task-active"><svg width="18" height="24" viewBox="0 0 18 24"><rect x="11" y="0" width="7" height="24" rx="1" fill="#c99a12"/><rect x="5.500" y="7" width="7" height="17" rx="1" fill="url(#pbiA)"/><rect x="0" y="13" width="7" height="11" rx="1" fill="#f5dc6b"/></svg></div>
    </div>
    <div class="tray">
      <svg class="tray-caret" width="14" height="8" viewBox="0 0 14 8"><path d="M1 7l6-6 6 6" fill="none" stroke="#fff"/></svg>
      <svg class="tray-cam" width="14" height="18" viewBox="0 0 14 18"><rect x="1" y="5" width="9" height="8" rx="1.500" fill="none" stroke="#ddd"/><path d="M10 8l3-2v6l-3-2M3 1h6M3 17h6" fill="none" stroke="#ddd"/></svg>
      <svg class="tray-net" width="18" height="16" viewBox="0 0 18 16"><path d="M5 1h12v9H5M1 3h6v7H1zM11 10v4M7 14.500h8" fill="none" stroke="#fff"/></svg>
      <svg class="tray-vol" width="16" height="14" viewBox="0 0 16 14"><path d="M1 5h3l4-3v10L4 9H1zM10 4c1.500 1.500 1.500 4.500 0 6M12.500 2.500c2.500 2.500 2.500 6.500 0 9" fill="none" stroke="#eee"/></svg>
      <span class="tray-lang">ENG</span>
      <div class="tray-clock"><span>11:09</span><span>03-03-2025</span></div>
      <div class="tray-notify">
        <svg width="16" height="14" viewBox="0 0 16 14"><path d="M0 0h16v11H8l-3 3v-3H0z" fill="#fff"/><path d="M3 3h10M3 6h10M3 8.500h7" stroke="#333" fill="none"/></svg>
        <span class="notify-badge">3</span>
      </div>
    </div>
  </footer>
</body>
</html>
```
FILE: styles.css
```css
/* Reset */
* {
  box-sizing: border-box;
}
body {
  margin: 0;
  width: 1920px;
  height: 1080px;
  overflow: hidden;
  font-family: "Open Sans", "Noto Sans", sans-serif;
  font-size: 12px;
  color: #252423;
  background: #fff;
  display: flex;
  flex-direction: column;
}
ul {
  margin: 0;
  padding: 0;
  list-style: none;
}
.defs {
  position: absolute;
}

/* Title bar */
.titlebar {
  height: 34px;
  background: #3b3a39;
  color: #fff;
  display: flex;
  align-items: center;
  position: relative;
  flex: none;
}
.tb-left {
  display: flex;
  align-items: center;
  width: 925px;
  padding-left: 16px;
  gap: 14px;
}
.tb-title {
  margin-left: -4px;
  font-size: 12px;
  letter-spacing: -0.18px;
  white-space: nowrap;
}
.tb-caret {
  width: 0;
  height: 0;
  margin-left: -9px;
  margin-bottom: 6px;
  border: 4px solid transparent;
  border-top: 5px solid #fff;
  border-bottom: 0;
}
.tb-search {
  width: 400px;
  height: 24px;
  background: #d2d2d0;
  border-radius: 2px;
  display: flex;
  align-items: center;
  gap: 5px;
  padding-left: 20px;
  font-size: 13px;
  color: #44544f;
}
.tb-right {
  flex: 1;
  display: flex;
  align-items: center;
  padding-left: 382px;
}
.tb-sign {
  font-size: 11.500px;
  width: 45px;
}
.win-btns {
  display: flex;
  gap: 32px;
  margin-left: 30px;
}

/* Ribbon */
.ribbon {
  height: 126px;
  background: #fafafa;
  flex: none;
  position: relative;
  z-index: 3;
  box-shadow: 0 2px 5px rgba(0, 0, 0, 0.16);
}
.rb-tabs {
  height: 32px;
  display: flex;
  align-items: center;
  gap: 32px;
  padding: 0 0 0 23px;
  font-size: 13.500px;
  position: relative;
}
.rb-tabs > span {
  line-height: 30px;
  height: 30px;
  position: relative;
  letter-spacing: -0.2px;
}
.rb-tabs .tab-file {
  margin-right: 5px;
}
.rb-tabs .active {
  font-weight: 600;
}
.rb-tabs .active::after {
  content: "";
  position: absolute;
  left: 0;
  right: 0;
  bottom: -1px;
  height: 2px;
  background: #117865;
}
.share-btn {
  position: absolute;
  right: 6px;
  top: 4px;
  width: 84px;
  height: 24px;
  background: #117865;
  color: #fff;
  border-radius: 3px;
  display: flex;
  align-items: center;
  justify-content: center;
  gap: 5px;
  font-size: 11.500px;
}
.rb-body {
  display: flex;
  height: 90px;
  padding-top: 4px;
  position: relative;
}
.rg {
  height: 88px;
  border-right: 1px solid #dcdcdc;
  display: flex;
  flex-direction: column;
}
.rg-btns {
  flex: 1;
  display: grid;
  align-items: start;
  padding-top: 3px;
}
.rg-label {
  height: 15px;
  text-align: center;
  font-size: 10px;
  line-height: 20px;
  color: #444;
  letter-spacing: -0.1px;
}
.rg-clip {
  width: 161px;
}
.rg-clip .rg-btns {
  grid-template-columns: 47px 1fr;
  padding-left: 4px;
}
.rg-data {
  width: 360px;
}
.rg-data .rg-btns {
  grid-template-columns: 50px 48px 63px 32px 50px 47px 62px;
  padding-left: 3px;
}
.rg-query {
  width: 117px;
}
.rg-query .rg-btns {
  grid-template-columns: 64px 34px;
  padding-left: 6px;
}
.rg-insert {
  width: 149px;
}
.rg-insert .rg-btns {
  grid-template-columns: 42px 38px 52px;
  padding-left: 8px;
}
.rg-calc {
  width: 187px;
}
.rg-calc .rg-btns {
  grid-template-columns: 77px 48px 48px;
  padding-left: 4px;
}
.rg-sens {
  width: 74px;
}
.rg-share,
.rg-cop {
  width: 59px;
}
.rb {
  display: flex;
  flex-direction: column;
  align-items: center;
  text-align: center;
  white-space: nowrap;
  font-size: 11.500px;
  line-height: 16px;
  letter-spacing: -0.25px;
  padding-top: 2px;
}
.rb svg {
  height: 32px;
  margin-bottom: 2px;
  flex: none;
}
.disabled {
  color: #b9b7b5;
}
.paste {
  font-size: 11px;
}
.clip-list {
  color: #b9b7b5;
  font-size: 11.500px;
  letter-spacing: -0.2px;
  display: flex;
  flex-direction: column;
  gap: 4px;
}
.clip-list li {
  display: flex;
  align-items: center;
  gap: 4px;
  height: 20px;
}
.chev {
  display: inline-block;
  width: 5px;
  height: 5px;
  margin: 0 0 2px 3px;
  border-right: 1px solid #444;
  border-bottom: 1px solid #444;
  transform: rotate(45deg);
}
.disabled .chev {
  border-color: #aaa;
}
.chev-w {
  border-color: #fff;
  width: 6px;
  height: 6px;
  margin: 0 0 3px 0;
}
.rb-collapse {
  position: absolute;
  right: 5px;
  top: 72px;
}
.xl {
  font: bold 11px "Liberation Sans", sans-serif;
  fill: #fff;
  text-anchor: middle;
}
.fx {
  font: italic 15px "Liberation Serif", serif;
  fill: #999;
}
.dax {
  font: 6.500px "Liberation Sans", sans-serif;
  fill: #777;
  text-anchor: middle;
}

/* Middle part */
.mainrow {
  height: 855px;
  display: flex;
  flex: none;
}
.rail {
  width: 41px;
  background: #f3f2f1;
  border-right: 1px solid #e1dfdd;
  flex: none;
}
.rail-item {
  height: 40px;
  display: flex;
  align-items: center;
  justify-content: center;
}
.rail-item.active {
  border-left: 3px solid #117865;
  padding-right: 2px;
}
.center {
  width: 1517px;
  flex: none;
  display: flex;
  flex-direction: column;
}
.stage {
  height: 820px;
  background: #fff;
  display: flex;
  padding: 0 0 0 19px;
}
.canvas {
  width: 1447px;
  height: 814px;
  background: #e6f0e5;
  border: 2px dotted #6f6f6f;
  border-top: 0;
  padding: 11px 0 0 20px;
  display: flex;
  flex-direction: column;
}
.filters-strip {
  width: 33px;
  margin-left: 18px;
  border-left: 1px solid #e1dfdd;
  display: flex;
  flex-direction: column;
  align-items: center;
  padding-top: 12px;
  gap: 17px;
  flex: none;
}
.filters-text {
  writing-mode: vertical-rl;
  font-size: 14.500px;
  font-weight: 700;
  margin-top: -12px;
}

/* Report visuals */
.row {
  display: flex;
  flex: none;
}
.row-kpi {
  height: 154px;
}
.row-mid {
  height: 369px;
  margin-top: 13px;
  gap: 18px;
}
.row-bottom {
  height: 243px;
  margin-top: 11px;
  gap: 18px;
}
.visual {
  border: 2px solid #141414;
  border-radius: 30px;
  box-shadow: 0 0 1px #111, inset 0 0 18px rgba(60, 75, 65, 0.55);
}
.brand-col {
  width: 127px;
  display: flex;
  flex-direction: column;
  justify-content: space-between;
}
.brand-logo {
  height: 90px;
  background: #c8dfc6;
  border: 1.500px solid #2c7a2c;
  border-radius: 26px;
  display: flex;
  align-items: center;
  justify-content: center;
}
.brand-art {
  display: block;
}
.brand-label {
  height: 55px;
  border: 1.500px solid #222;
  border-radius: 13px;
  background: #d7ded9;
  box-shadow: inset 0 0 8px rgba(70, 85, 75, 0.35);
  color: #10224a;
  font-size: 14.500px;
  line-height: 21px;
  letter-spacing: -0.3px;
  padding: 9px 0 0 9px;
  position: relative;
}
.brand-scroll {
  position: absolute;
  right: 7px;
  top: 9px;
  width: 9px;
  height: 34px;
  background: #c9c9c9;
}
.kpi {
  width: 198px;
  display: flex;
  flex-direction: column;
  align-items: center;
  justify-content: center;
  padding-top: 12px;
}
.k1 { margin-left: 10px; }
.k2 { margin-left: 14px; }
.k3 { margin-left: 18px; }
.k4 { margin-left: 10px; width: 199px; }
.k5 { margin-left: 12px; }
.k6 { margin-left: 9px; }
.kpi-value {
  font-family: Roboto, "Liberation Sans", sans-serif;
  font-weight: 700;
  font-size: 39px;
  line-height: 44px;
  color: #0d1b3e;
  transform: scaleX(0.82);
}
.kpi-name {
  font-size: 17px;
  font-weight: 700;
  line-height: 24px;
  margin-top: 5px;
  color: #111;
  white-space: nowrap;
}
.viz-title {
  margin: 0;
  padding-top: 11px;
  text-align: center;
  font-size: 13.500px;
  line-height: 16px;
  font-weight: 700;
  color: #111;
  letter-spacing: -0.2px;
}
.chart-main {
  width: 1125px;
}
.chart-main .viz-title {
  padding-left: 5px;
}
.legend {
  margin-top: 13px;
  height: 20px;
  padding-left: 36px;
  display: flex;
  align-items: center;
  gap: 8px;
  font-size: 12.400px;
  font-weight: 700;
  color: #111;
  white-space: nowrap;
}
.legend-name {
  font-size: 13px;
  font-weight: 400;
  margin-right: 3px;
}
.lg {
  display: flex;
  align-items: center;
  gap: 2px;
}
.lg i {
  width: 11px;
  height: 11px;
  border-radius: 50%;
}
.c-act { background: #107c10; }
.c-nsw { background: #002050; }
.c-nt { background: #a80000; }
.c-qld { background: #5c2d91; }
.c-sa { background: #004b50; }
.c-tas { background: #0078d4; }
.c-vic { background: #d83b01; }
.c-wa { background: #b4009e; }
.chart-svg {
  display: block;
}
.gridline path {
  stroke: #bcc4bc;
  stroke-width: 1;
  stroke-dasharray: 1 2;
  fill: none;
}
.ax-y text {
  font: 700 12px "Open Sans", sans-serif;
  text-anchor: end;
  fill: #111;
  letter-spacing: -0.4px;
}
.ax-x text {
  font: 700 11.500px "Open Sans", sans-serif;
  text-anchor: middle;
  fill: #111;
  letter-spacing: -0.3px;
}
.ax-title {
  font: bold 11px "Liberation Sans", sans-serif;
  text-anchor: middle;
  fill: #111;
  letter-spacing: 0.2px;
}
.stack rect {
  stroke: rgba(255, 255, 255, 0.18);
  stroke-width: 1;
}
.f-act { fill: #107c10; }
.f-nsw { fill: #002050; }
.f-nt { fill: #a80000; }
.f-qld { fill: #5c2d91; }
.f-sa { fill: #004b50; }
.f-tas { fill: #0078d4; }
.f-vic { fill: #d83b01; }
.f-wa { fill: #b4009e; }
.mid-side {
  width: 253px;
  display: flex;
  flex-direction: column;
  gap: 8px;
}
.total {
  width: 246px;
  height: 153px;
  padding-top: 11px;
}
.total .kpi-name {
  font-size: 17px;
  margin-top: 6px;
}
.donut {
  height: 208px;
}
.donut-title {
  padding-top: 12px;
  padding-left: 4px;
}
.ring {
  fill: none;
  stroke-width: 22.800;
}
.r-nsw { stroke: #002050; }
.r-act { stroke: #107c10; }
.leader {
  fill: none;
  stroke: #b5b9b5;
}
.donut-lab {
  font: 700 11.500px Roboto, sans-serif;
  text-anchor: middle;
  fill: #111;
}
.funnel {
  width: 589px;
}
.funnel-title {
  padding-top: 15px;
  padding-left: 5px;
}
.fn-pct {
  font: 700 11px Roboto, sans-serif;
  text-anchor: middle;
  fill: #111;
}
.fn-range {
  fill: none;
  stroke: #b4b4b4;
  stroke-width: 1.200;
}
.fn-bars rect {
  fill: #0e5d10;
  stroke: #6aa16c;
  stroke-width: 1;
}
.fn-cat text,
.fn-val text {
  font: 700 10.500px Roboto, sans-serif;
  fill: #111;
}
.fn-cat text {
  font-size: 11.500px;
  letter-spacing: 0.1px;
}
.table-card {
  width: 789px;
  padding: 14px 0 0 21px;
}
.matrix {
  border-collapse: collapse;
  table-layout: fixed;
  width: 542px;
  font-size: 14px;
  color: #111;
  background: #fff;
}
.matrix th,
.matrix td {
  padding: 1px 6px 0;
  font-weight: 700;
  white-space: nowrap;
}
.matrix th:first-child {
  width: 196px;
  text-align: center;
  border-right: 1px solid #0d1b3e;
  padding: 1px 2px 0;
}
.matrix td {
  text-align: right;
  width: 115px;
}
.matrix thead tr {
  height: 46px;
  border-bottom: 1px solid #111;
}
.matrix thead th,
.matrix thead th:first-child {
  text-align: center;
  padding-top: 0;
  padding-bottom: 6px;
}
.matrix thead th:first-child {
  border-right: 0;
}
.matrix tbody tr {
  height: 37.500px;
}
.band-dark th,
.band-dark td:nth-child(2),
.band-dark td:nth-child(3) {
  background: #9ea2ab;
}
.band-light th,
.band-light td:nth-child(2),
.band-light td:nth-child(3) {
  background: #e5e5e5;
}

/* Tab bar */
.tabbar {
  height: 35px;
  background: #f3f2f1;
  display: flex;
  font-size: 12px;
  letter-spacing: -0.25px;
  flex: none;
}
.tab-views {
  width: 127px;
  display: flex;
  align-items: center;
  padding-left: 11px;
  border-right: 1px solid #bbb;
}
.view-btn {
  width: 20px;
  height: 35px;
  display: flex;
  align-items: center;
  justify-content: center;
  position: relative;
  margin-right: 27px;
}
.view-btn + .view-btn {
  margin-right: 16px;
}
.view-btn.on::after {
  content: "";
  position: absolute;
  left: -1px;
  right: -1px;
  bottom: 4px;
  height: 3px;
  background: #117865;
}
.tab-arrow {
  color: #aaa;
  font-size: 14px;
  width: 22px;
  text-align: center;
}
.tab {
  background: #fff;
  display: flex;
  align-items: center;
  justify-content: center;
  width: 162px;
  border-right: 1px solid #ccc;
  position: relative;
}
.tab:nth-of-type(3) {
  width: 145px;
}
.tab.active {
  width: 178px;
  border-right: 0;
  border-bottom: 4px solid #117865;
  padding-top: 4px;
  font-weight: 500;
  letter-spacing: 0;
}
.tab-x {
  position: absolute;
  right: 4px;
  top: 2px;
  font-size: 10px;
}
.tab-add {
  width: 39px;
  background: #117865;
  color: #fff;
  display: flex;
  align-items: center;
  justify-content: center;
  font-size: 20px;
  font-weight: 700;
}

/* Right panes */
.pane {
  background: #f3f2f1;
  border-left: 1px solid #e1dfdd;
  flex: none;
  height: 855px;
}
.viz {
  width: 181px;
}
.data {
  width: 181px;
}
.pane-head {
  display: flex;
  align-items: center;
  justify-content: space-between;
  height: 19px;
  margin-top: 9px;
  font-size: 15px;
  font-weight: 600;
  padding: 0 7px 0 8px;
  color: #252423;
}
.build-label {
  margin: 9px 0 0 8px;
  font-size: 11.500px;
  font-weight: 600;
  line-height: 16px;
}
.build-tabs {
  display: flex;
  margin: 3px 0 0 8px;
  height: 31px;
  gap: 34px;
}
.build-tab {
  width: 32px;
  display: flex;
  align-items: center;
  justify-content: center;
}
.build-tab.on {
  background: #c8c8c8;
}
.build-rule {
  height: 13px;
  border-bottom: 1px solid #a19f9d;
  position: relative;
}
.build-rule::after {
  content: "";
  position: absolute;
  left: 19px;
  bottom: -5px;
  width: 10px;
  height: 10px;
  background: #f3f2f1;
  border-left: 1px solid #a19f9d;
  border-top: 1px solid #a19f9d;
  transform: rotate(45deg);
}
.viz-grid {
  display: grid;
  grid-template-columns: repeat(6, 18px);
  grid-auto-rows: 18px;
  column-gap: 10px;
  row-gap: 9.800px;
  padding: 13.500px 0 0 11px;
}
.viz-grid svg {
  width: 18px;
  height: 18px;
  display: block;
}
.ik { fill: none; stroke: #444; stroke-width: 1; }
.ib { fill: #7ab8ea; stroke: #2b7cc3; stroke-width: 1; }
.ig { fill: #b8b8b8; stroke: #8a8a8a; stroke-width: 1; }
.it { fill: #fff; stroke: #444; stroke-width: 1; }
.il { fill: none; stroke: #2b7cc3; stroke-width: 1; }
.ih { fill: #d9d8d6; }
.iy { fill: #ee9b2a; }
.lines { fill: none; stroke: #2b7cc3; stroke-width: 1.300; }
.sq-l { fill: #7ab8ea; }
.sq-d { fill: #333; }
.i123 {
  font: 8px "Liberation Sans", sans-serif;
  fill: #4a9ad9;
  text-anchor: middle;
}
.icon-r,
.icon-py {
  font: bold 15px "Liberation Sans", sans-serif;
  color: #2b7cc3;
  line-height: 18px;
  text-align: center;
}
.icon-py {
  font-size: 16px;
  letter-spacing: -0.5px;
}
.viz-more {
  margin: 11px 0 0 11px;
  height: 18px;
  font-size: 14px;
  font-weight: 400;
  letter-spacing: 2px;
  line-height: 18px;
}
.viz-rule {
  height: 2px;
  margin-top: 11px;
  background: #e1dfdd;
}
.well-label {
  margin: 6.500px 0 0 12px;
  font-size: 11.500px;
  line-height: 16px;
}
.well {
  margin: 5px 5px 0 4px;
  height: 28px;
  background: #fff;
  border: 1px dashed #c8c6c4;
  font-size: 11.500px;
  letter-spacing: -0.1px;
  padding-left: 10px;
  display: flex;
  align-items: center;
}
.well-head {
  margin: 9px 0 0 12px;
  font-size: 12px;
  font-weight: 600;
  line-height: 18px;
  color: #484644;
}
.toggle-row {
  margin: 0 0 0 12px;
  height: 27px;
  padding-top: 4px;
  display: flex;
  align-items: center;
  justify-content: space-between;
  width: 147px;
  font-size: 11.500px;
  letter-spacing: -0.1px;
  color: #333;
}
.toggle {
  width: 32px;
  height: 16px;
  border-radius: 8px;
  font-size: 8.500px;
  display: flex;
  align-items: center;
  gap: 2px;
  padding: 0 3px;
  font-weight: 600;
}
.toggle i {
  width: 8px;
  height: 8px;
  border-radius: 50%;
  display: block;
  flex: none;
}
.toggle.off {
  border: 1px solid #8a8886;
  background: #fff;
  color: #605e5c;
}
.toggle.off i {
  background: #605e5c;
}
.toggle.on {
  background: #117865;
  color: #fff;
  justify-content: flex-end;
}
.toggle.on i {
  background: #fff;
}
.well-drill {
  margin-top: 8px;
  height: 26px;
  padding-left: 8px;
}
.data-search {
  margin: 17px 4px 0 5px;
  height: 23px;
  background: #fff;
  border: 1px solid #e1dfdd;
  border-bottom: 1px solid #8a8886;
  border-radius: 3px;
  display: flex;
  align-items: center;
  gap: 8px;
  padding-left: 12px;
  font-size: 12.500px;
  color: #605e5c;
}
.tree {
  margin-top: 9px;
  font-size: 11.500px;
  color: #333;
}
.tree li {
  height: 24px;
  display: flex;
  align-items: center;
  padding-left: 15px;
  gap: 4px;
}
.tree li svg {
  margin-right: 2px;
}
.tree-chev {
  width: 7px;
  height: 7px;
  margin-right: 3px;
  border-right: 1px solid #666;
  border-top: 1px solid #666;
  transform: rotate(45deg);
}

/* Status bar */
.statusbar {
  height: 25px;
  background: #f3f2f1;
  border-top: 1px solid #e1dfdd;
  display: flex;
  align-items: center;
  justify-content: space-between;
  padding: 0 18px 0 4px;
  font-size: 10.500px;
  color: #484644;
  flex: none;
}
.zoom-ctl {
  display: flex;
  align-items: center;
  gap: 5px;
}
.zoom-sign {
  font-size: 13px;
  width: 8px;
  text-align: center;
}
.zoom-track {
  width: 100px;
  height: 1px;
  background: #605e5c;
  position: relative;
}
.zoom-track i {
  position: absolute;
  left: 50px;
  top: -5px;
  width: 4px;
  height: 11px;
  background: #605e5c;
}
.zoom-val {
  font-size: 11.500px;
  margin: 0 8px 0 8px;
  color: #605e5c;
}

/* Taskbar */
.taskbar {
  height: 40px;
  background: #2b2829;
  border-top: 1px solid #000;
  display: flex;
  color: #fff;
  flex: none;
}
.start {
  width: 48px;
  display: flex;
  align-items: center;
  justify-content: center;
}
.task-search {
  width: 288px;
  background: #f2f2f2;
  color: #222;
  display: flex;
  align-items: center;
  gap: 11px;
  padding-left: 11px;
  font-size: 14.300px;
  letter-spacing: -0.2px;
}
.task-icons {
  display: flex;
}
.task-ico {
  width: 49px;
  display: flex;
  align-items: center;
  justify-content: center;
}
.task-active {
  background: #5c5a5b;
  border-bottom: 2px solid #76b9ed;
}
.tray {
  flex: 1;
  display: flex;
  align-items: center;
  justify-content: flex-end;
  padding-right: 25px;
}
.tray-cam { margin-left: 10px; }
.tray-net { margin-left: 8px; }
.tray-vol { margin-left: 6px; }
.tray-lang {
  font-size: 11.500px;
  margin-left: 11px;
}
.tray-clock {
  display: flex;
  flex-direction: column;
  align-items: center;
  font-size: 11px;
  line-height: 18px;
  width: 60px;
  margin-left: 11px;
}
.tray-notify {
  position: relative;
  margin-left: 17px;
  width: 16px;
}
.notify-badge {
  position: absolute;
  left: 7px;
  top: 4px;
  width: 16px;
  height: 16px;
  border-radius: 50%;
  background: #3a3839;
  border: 1px solid #888;
  font-size: 10px;
  line-height: 14px;
  text-align: center;
}
```
